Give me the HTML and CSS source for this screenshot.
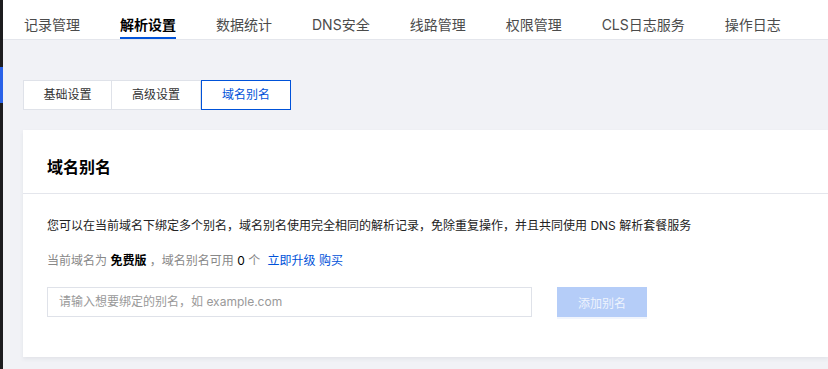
FILE: index.html
```html
<!DOCTYPE html>
<html lang="zh-CN">
<head>
<meta charset="utf-8">
<title>域名别名</title>
<link rel="stylesheet" href="styles.css">
</head>
<body>
<div class="strip"><div class="strip-mark"></div></div>
<div class="main">
  <nav class="tabs">
    <span class="tab">记录管理</span>
    <span class="tab active">解析设置</span>
    <span class="tab">数据统计</span>
    <span class="tab">DNS安全</span>
    <span class="tab">线路管理</span>
    <span class="tab">权限管理</span>
    <span class="tab">CLS日志服务</span>
    <span class="tab">操作日志</span>
  </nav>
  <div class="content">
    <div class="segments">
      <span class="seg">基础设置</span>
      <span class="seg">高级设置</span>
      <span class="seg seg-active">域名别名</span>
    </div>
    <section class="card">
      <header class="card-head">域名别名</header>
      <div class="card-body">
        <p class="desc">您可以在当前域名下绑定多个别名，域名别名使用完全相同的解析记录，免除重复操作，并且共同使用 DNS 解析套餐服务</p>
        <p class="quota">当前域名为 <b class="strong">免费版</b> ，域名别名可用 <span class="num">0</span> 个 <a class="link link-first">立即升级</a> <a class="link">购买</a></p>
        <div class="form-row">
          <div class="input">请输入想要绑定的别名，如 example.com</div>
          <button class="btn">添加别名</button>
        </div>
      </div>
    </section>
  </div>
</div>
</body>
</html>
```

FILE: styles.css
```css
html, body {
  margin: 0;
  padding: 0;
  height: 100%;
}
body {
  display: flex;
  font-family: Inter, "Noto Sans CJK SC", sans-serif;
  background: #f1f2f6;
  overflow: hidden;
}
.strip {
  width: 3px;
  flex: none;
  background: #1d1d1f;
  padding-top: 67px;
  box-sizing: border-box;
}
.strip-mark {
  height: 36px;
  background: #2a62e8;
}
.main {
  flex: 1;
  min-width: 0;
  display: flex;
  flex-direction: column;
}
.tabs {
  height: 39px;
  background: #fff;
  border-bottom: 1px solid #e4e6ec;
  display: flex;
  gap: 40px;
  padding-left: 21px;
}
.tab {
  font-size: 14px;
  line-height: 28px;
  padding-top: 11px;
  color: #4b4b4b;
  box-sizing: border-box;
  height: 39px;
  white-space: nowrap;
}
.tab.active {
  color: #000;
  font-weight: 600;
  border-bottom: 2px solid #0052d9;
}
.content {
  padding: 40px 0 0 20px;
}
.segments {
  display: flex;
  height: 30px;
  width: fit-content;
}
.seg {
  width: 89px;
  box-sizing: border-box;
  background: #fff;
  border: 1px solid #dfe2e9;
  font-size: 12px;
  line-height: 28px;
  text-align: center;
  color: #333;
}
.seg + .seg {
  border-left: none;
}
.seg-active {
  width: 90px;
  border: 1px solid #0052d9 !important;
  color: #0052d9;
}
.card {
  margin-top: 20px;
  background: #fff;
  box-shadow: 0 2px 4px rgba(54, 58, 80, 0.08);
}
.card-head {
  height: 63px;
  border-bottom: 1px solid #e4e6ec;
  padding-left: 24px;
  font-size: 16px;
  font-weight: 600;
  color: #000;
  line-height: 74px;
}
.card-body {
  padding: 22px 24px 40px;
}
.desc {
  margin: 0;
  font-size: 12px;
  line-height: 20px;
  color: #222;
}
.quota {
  margin: 15px 0 0;
  font-size: 12px;
  line-height: 20px;
  color: #888;
}
.strong {
  color: #000;
  font-weight: 600;
}
.num {
  color: #000;
}
.link {
  color: #0052d9;
}
.link-first {
  margin-left: 4px;
}
.form-row {
  display: flex;
  gap: 25px;
  margin-top: 16px;
}
.input {
  width: 485px;
  height: 30px;
  box-sizing: border-box;
  border: 1px solid #dfe2e9;
  font-size: 12px;
  line-height: 28px;
  padding-left: 11px;
  color: #999;
}
.btn {
  width: 90px;
  height: 30px;
  border: none;
  background: #b5cdf8;
  color: #eef3fd;
  font-family: inherit;
  font-size: 12px;
  padding: 0;
  box-shadow: 0 2px 0 #f1f5fd;
}
```
